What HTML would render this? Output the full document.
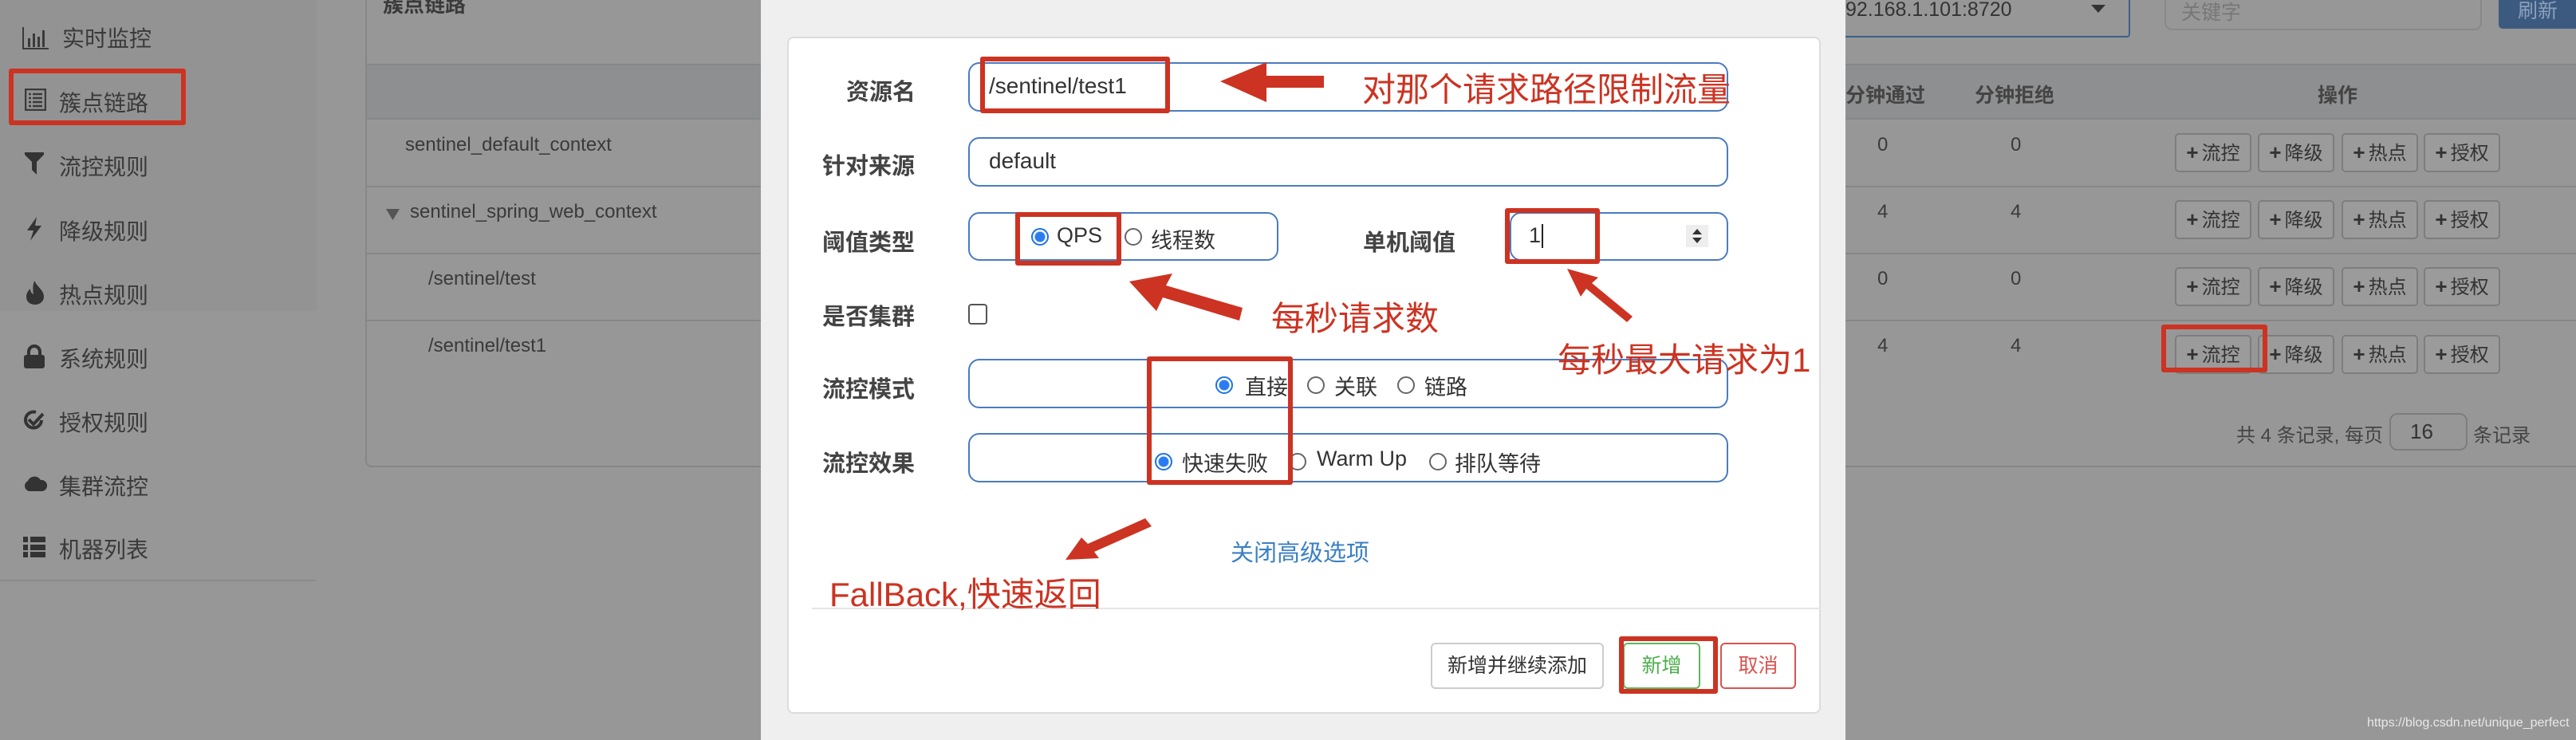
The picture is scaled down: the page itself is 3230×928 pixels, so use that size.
<!DOCTYPE html>
<html><head><meta charset="utf-8"><style>
*{margin:0;padding:0;box-sizing:border-box}
body{width:3230px;height:928px;background:#979797;position:relative;overflow:hidden;font-family:"Liberation Sans","Noto Sans CJK SC",sans-serif;color:#3a3a3a}
.a{position:absolute;white-space:nowrap}
.side{font-size:28px;color:#3a3a3a}
.row{font-size:24px}
.btn{position:absolute;width:96px;height:49px;border:2px solid #7d7d7d;border-radius:5px;background:#9b9b9b;font-size:24px;color:#333;line-height:45px;text-align:center}
.btn b{font-size:26px;margin-right:4px}
.red{border:6px solid #cc3322;border-radius:3px;position:absolute;z-index:5}
.lab{position:absolute;font-size:29px;font-weight:bold;color:#444;white-space:nowrap}
.box{position:absolute;border:2px solid #4a7bc0;border-radius:14px;background:#fff}
.rad{position:absolute;width:22px;height:22px;border-radius:50%;border:2px solid #666;background:#fff}
.rad.on{border:2px solid #1a73e8;background:radial-gradient(circle,#2b7cf0 0 6px,#fff 7px)}
.rt{position:absolute;font-size:27px;color:#333;white-space:nowrap}
.note{position:absolute;color:#cc3322;font-size:42px;white-space:nowrap;z-index:6}
svg.ar{z-index:6}
</style></head><body>
<!-- sidebar -->
<div class="a" style="left:0;top:0;width:397px;height:390px;background:#939393"></div>
<div class="a" style="left:0;top:727px;width:397px;height:2px;background:#8a8a8a"></div>
<svg class="a" style="left:28px;top:34px" width="34" height="28" viewBox="0 0 34 28"><path d="M1 0V27H33" stroke="#3a3a3a" stroke-width="2" fill="none"/><rect x="7" y="14" width="3" height="11" fill="#3a3a3a"/><rect x="13" y="8" width="3" height="17" fill="#3a3a3a"/><rect x="19" y="12" width="3" height="13" fill="#3a3a3a"/><rect x="25" y="4" width="3" height="21" fill="#3a3a3a"/></svg>
<div class="a side" style="left:78px;top:27px">实时监控</div>
<svg class="a" style="left:31px;top:111px" width="27" height="28"><rect x="1" y="1" width="25" height="26" fill="none" stroke="#3a3a3a" stroke-width="2.5"/><g stroke="#3a3a3a" stroke-width="2.5"><path d="M5 7h3M10 7h12M5 12h3M10 12h12M5 17h3M10 17h12M5 22h3M10 22h12"/></g></svg>
<div class="a side" style="left:74px;top:108px">簇点链路</div>
<div class="red" style="left:11px;top:86px;width:222px;height:71px"></div>
<svg class="a" style="left:31px;top:191px" width="24" height="28"><path d="M0 0H24V3L15 12V28L9 22V12L0 3Z" fill="#333"/></svg>
<div class="a side" style="left:74px;top:188px">流控规则</div>
<svg class="a" style="left:32px;top:272px" width="22" height="30"><path d="M14 0L2 17H10L6 30L20 11H12Z" fill="#333"/></svg>
<div class="a side" style="left:74px;top:269px">降级规则</div>
<svg class="a" style="left:31px;top:352px" width="26" height="30"><path d="M12 0C16 8 24 12 24 20C24 26 19 30 13 30C6 30 2 26 2 20C2 15 5 12 7 10C7 14 9 16 11 17C10 12 10 6 12 0Z" fill="#333"/></svg>
<div class="a side" style="left:74px;top:349px">热点规则</div>
<svg class="a" style="left:29px;top:432px" width="28" height="30"><path d="M7 13V9A7 7 0 0 1 21 9V13" stroke="#333" stroke-width="4" fill="none"/><rect x="1" y="13" width="26" height="17" rx="3" fill="#333"/></svg>
<div class="a side" style="left:74px;top:429px">系统规则</div>
<svg class="a" style="left:29px;top:513px" width="28" height="28"><path d="M23 14A10 10 0 1 1 16 4" stroke="#333" stroke-width="4" fill="none"/><path d="M7 13l6 6 12-13" stroke="#333" stroke-width="4" fill="none"/></svg>
<div class="a side" style="left:74px;top:509px">授权规则</div>
<svg class="a" style="left:29px;top:595px" width="30" height="22"><path d="M7 21A7 7 0 0 1 6 8A9 9 0 0 1 22 7A7 7 0 0 1 24 21Z" fill="#333"/></svg>
<div class="a side" style="left:74px;top:589px">集群流控</div>
<svg class="a" style="left:29px;top:673px" width="28" height="26"><g fill="#333"><rect x="0" y="0" width="6" height="7"/><rect x="9" y="0" width="19" height="7"/><rect x="0" y="10" width="6" height="7"/><rect x="9" y="10" width="19" height="7"/><rect x="0" y="19" width="6" height="7"/><rect x="9" y="19" width="19" height="7"/></g></svg>
<div class="a side" style="left:74px;top:668px">机器列表</div>

<!-- main panel -->
<div class="a" style="left:458px;top:-10px;width:2800px;height:596px;border:2px solid #868686;border-radius:8px;background:#979797"></div>
<div class="a" style="left:480px;top:-14px;font-size:26px;font-weight:bold">簇点链路</div>
<div class="a" style="left:460px;top:80px;width:2780px;height:70px;background:#8e8f91;border-top:2px solid #878787;border-bottom:2px solid #878787"></div>
<div class="a" style="left:460px;top:233px;width:2780px;height:2px;background:#878787"></div>
<div class="a" style="left:460px;top:317px;width:2780px;height:2px;background:#878787"></div>
<div class="a" style="left:460px;top:401px;width:2780px;height:2px;background:#878787"></div>
<div class="a row" style="left:508px;top:168px">sentinel_default_context</div>
<svg class="a" style="left:484px;top:262px" width="17" height="14"><path d="M0 0H17L8.5 14Z" fill="#555"/></svg>
<div class="a row" style="left:514px;top:252px">sentinel_spring_web_context</div>
<div class="a row" style="left:537px;top:336px">/sentinel/test</div>
<div class="a row" style="left:537px;top:420px">/sentinel/test1</div>

<!-- top right controls -->
<div class="a" style="left:2200px;top:-10px;width:471px;height:57px;border:2px solid #3d5f8a;border-radius:4px"></div>
<div class="a" style="left:2314px;top:-2px;font-size:25px;color:#333">92.168.1.101:8720</div>
<svg class="a" style="left:2622px;top:6px" width="18" height="10"><path d="M0 0H18L9 10Z" fill="#333"/></svg>
<div class="a" style="left:2714px;top:-10px;width:398px;height:48px;border:2px solid #888;border-radius:10px"></div>
<div class="a" style="left:2735px;top:-4px;font-size:25px;color:#777">关键字</div>
<div class="a" style="left:3133px;top:-10px;width:120px;height:46px;background:#3c5a80;border-radius:5px"></div>
<div class="a" style="left:3157px;top:-6px;font-size:25px;color:#8aa0bb">刷新</div>

<div class="a" style="left:2314px;top:100px;font-size:25px;font-weight:bold;color:#444">分钟通过</div>
<div class="a" style="left:2476px;top:100px;font-size:25px;font-weight:bold;color:#444">分钟拒绝</div>
<div class="a" style="left:2906px;top:100px;font-size:25px;font-weight:bold;color:#444">操作</div>
<div class="a row" style="left:2354px;top:168px">0</div><div class="a row" style="left:2521px;top:168px">0</div>
<div class="a row" style="left:2354px;top:252px">4</div><div class="a row" style="left:2521px;top:252px">4</div>
<div class="a row" style="left:2354px;top:336px">0</div><div class="a row" style="left:2521px;top:336px">0</div>
<div class="a row" style="left:2354px;top:420px">4</div><div class="a row" style="left:2521px;top:420px">4</div>

<div class="btn" style="left:2727px;top:167px"><b>+</b>流控</div><div class="btn" style="left:2831px;top:167px"><b>+</b>降级</div><div class="btn" style="left:2936px;top:167px"><b>+</b>热点</div><div class="btn" style="left:3039px;top:167px"><b>+</b>授权</div>
<div class="btn" style="left:2727px;top:251px"><b>+</b>流控</div><div class="btn" style="left:2831px;top:251px"><b>+</b>降级</div><div class="btn" style="left:2936px;top:251px"><b>+</b>热点</div><div class="btn" style="left:3039px;top:251px"><b>+</b>授权</div>
<div class="btn" style="left:2727px;top:335px"><b>+</b>流控</div><div class="btn" style="left:2831px;top:335px"><b>+</b>降级</div><div class="btn" style="left:2936px;top:335px"><b>+</b>热点</div><div class="btn" style="left:3039px;top:335px"><b>+</b>授权</div>
<div class="btn" style="left:2727px;top:420px"><b>+</b>流控</div><div class="btn" style="left:2831px;top:420px"><b>+</b>降级</div><div class="btn" style="left:2936px;top:420px"><b>+</b>热点</div><div class="btn" style="left:3039px;top:420px"><b>+</b>授权</div>
<div class="red" style="left:2710px;top:407px;width:133px;height:60px"></div>

<div class="a" style="left:2804px;top:526px;font-size:24px;color:#444">共 4 条记录, 每页</div>
<div class="a" style="left:2996px;top:518px;width:98px;height:47px;border:2px solid #7d7d7d;border-radius:10px;font-size:26px;line-height:43px;padding-left:24px;color:#333">16</div>
<div class="a" style="left:3101px;top:526px;font-size:24px;color:#444">条记录</div>
<div class="a" style="left:2968px;top:898px;font-size:16px;color:#e8e8e8">https://blog.csdn.net/unique_perfect</div>

<!-- modal -->
<div class="a" style="left:954px;top:0;width:1360px;height:928px;background:#efefef"></div>
<div class="a" style="left:987px;top:46px;width:1296px;height:849px;background:#fff;border:2px solid #dcdcdc;border-radius:8px"></div>

<div class="lab" style="left:1061px;top:92px">资源名</div>
<div class="box" style="left:1214px;top:78px;width:953px;height:62px"></div>
<div class="rt" style="left:1240px;top:92px;font-size:28px">/sentinel/test1</div>
<div class="red" style="left:1229px;top:71px;width:238px;height:71px"></div>
<svg class="a ar" style="left:1530px;top:78px" width="132" height="50"><path d="M0 24L58 0V17H130V32H58V50Z" fill="#cc3322"/></svg>
<div class="note" style="left:1708px;top:79px">对那个请求路径限制流量</div>

<div class="lab" style="left:1031px;top:185px">针对来源</div>
<div class="box" style="left:1214px;top:172px;width:953px;height:62px"></div>
<div class="rt" style="left:1240px;top:186px;font-size:28px">default</div>

<div class="lab" style="left:1031px;top:281px">阈值类型</div>
<div class="box" style="left:1214px;top:266px;width:389px;height:61px"></div>
<div class="rad on" style="left:1293px;top:286px"></div><div class="rt" style="left:1325px;top:280px">QPS</div>
<div class="rad" style="left:1410px;top:286px"></div><div class="rt" style="left:1443px;top:280px">线程数</div>
<div class="red" style="left:1273px;top:266px;width:133px;height:67px"></div>
<div class="lab" style="left:1709px;top:281px">单机阈值</div>
<div class="box" style="left:1893px;top:266px;width:274px;height:61px"></div>
<div class="rt" style="left:1917px;top:280px;font-size:27px">1</div>
<div class="a" style="left:1933px;top:281px;width:2px;height:30px;background:#222"></div>
<svg class="a" style="left:2114px;top:282px" width="28" height="28"><rect width="28" height="28" fill="#eee"/><path d="M8 12L14 5L20 12ZM8 16L14 23L20 16Z" fill="#333"/></svg>
<div class="red" style="left:1887px;top:261px;width:119px;height:70px"></div>
<svg class="a ar" style="left:1410px;top:340px" width="150" height="65"><path d="M6 13L60 3L52 18L148 46L144 62L48 33L40 50Z" fill="#cc3322"/></svg>
<div class="note" style="left:1594px;top:366px">每秒请求数</div>
<svg class="a ar" style="left:1960px;top:332px" width="90" height="72"><path d="M5 5L44 16L36 23L87 65L80 72L29 30L22 40Z" fill="#cc3322"/></svg>

<div class="lab" style="left:1031px;top:374px">是否集群</div>
<div class="a" style="left:1214px;top:381px;width:24px;height:26px;border:2px solid #555;border-radius:4px;background:#fff"></div>

<div class="lab" style="left:1031px;top:465px">流控模式</div>
<div class="box" style="left:1214px;top:450px;width:953px;height:62px"></div>
<div class="rad on" style="left:1524px;top:472px"></div><div class="rt" style="left:1561px;top:464px">直接</div>
<div class="rad" style="left:1639px;top:472px"></div><div class="rt" style="left:1673px;top:464px">关联</div>
<div class="rad" style="left:1752px;top:472px"></div><div class="rt" style="left:1786px;top:464px">链路</div>
<div class="note" style="left:1953px;top:418px">每秒最大请求为1</div>

<div class="lab" style="left:1031px;top:558px">流控效果</div>
<div class="box" style="left:1214px;top:543px;width:953px;height:62px"></div>
<div class="rad on" style="left:1448px;top:568px"></div><div class="rt" style="left:1482px;top:560px">快速失败</div>
<div class="rad" style="left:1616px;top:568px"></div><div class="rt" style="left:1651px;top:560px">Warm Up</div>
<div class="rad" style="left:1792px;top:568px"></div><div class="rt" style="left:1824px;top:560px">排队等待</div>
<div class="red" style="left:1438px;top:447px;width:183px;height:161px"></div>

<svg class="a ar" style="left:1334px;top:648px" width="112" height="56"><path d="M2 54L22 26L30 34L102 2L110 12L38 44L44 52Z" fill="#cc3322"/></svg>
<div class="a" style="left:1543px;top:670px;font-size:29px;color:#3b7fc4">关闭高级选项</div>
<div class="a" style="left:1018px;top:762px;width:1265px;height:2px;background:#e5e5e5"></div>
<div class="note" style="left:1040px;top:712px">FallBack,快速返回</div>

<div class="a" style="left:1794px;top:806px;width:217px;height:58px;border:2px solid #ccc;border-radius:6px;font-size:25px;line-height:54px;text-align:center;color:#333">新增并继续添加</div>
<div class="a" style="left:2035px;top:806px;width:97px;height:58px;border:2px solid #5cb85c;border-radius:6px;font-size:25px;line-height:54px;text-align:center;color:#4cae4c">新增</div>
<div class="red" style="left:2030px;top:798px;width:124px;height:72px"></div>
<div class="a" style="left:2157px;top:806px;width:95px;height:58px;border:2px solid #d9534f;border-radius:6px;font-size:25px;line-height:54px;text-align:center;color:#d9534f">取消</div>
</body></html>
